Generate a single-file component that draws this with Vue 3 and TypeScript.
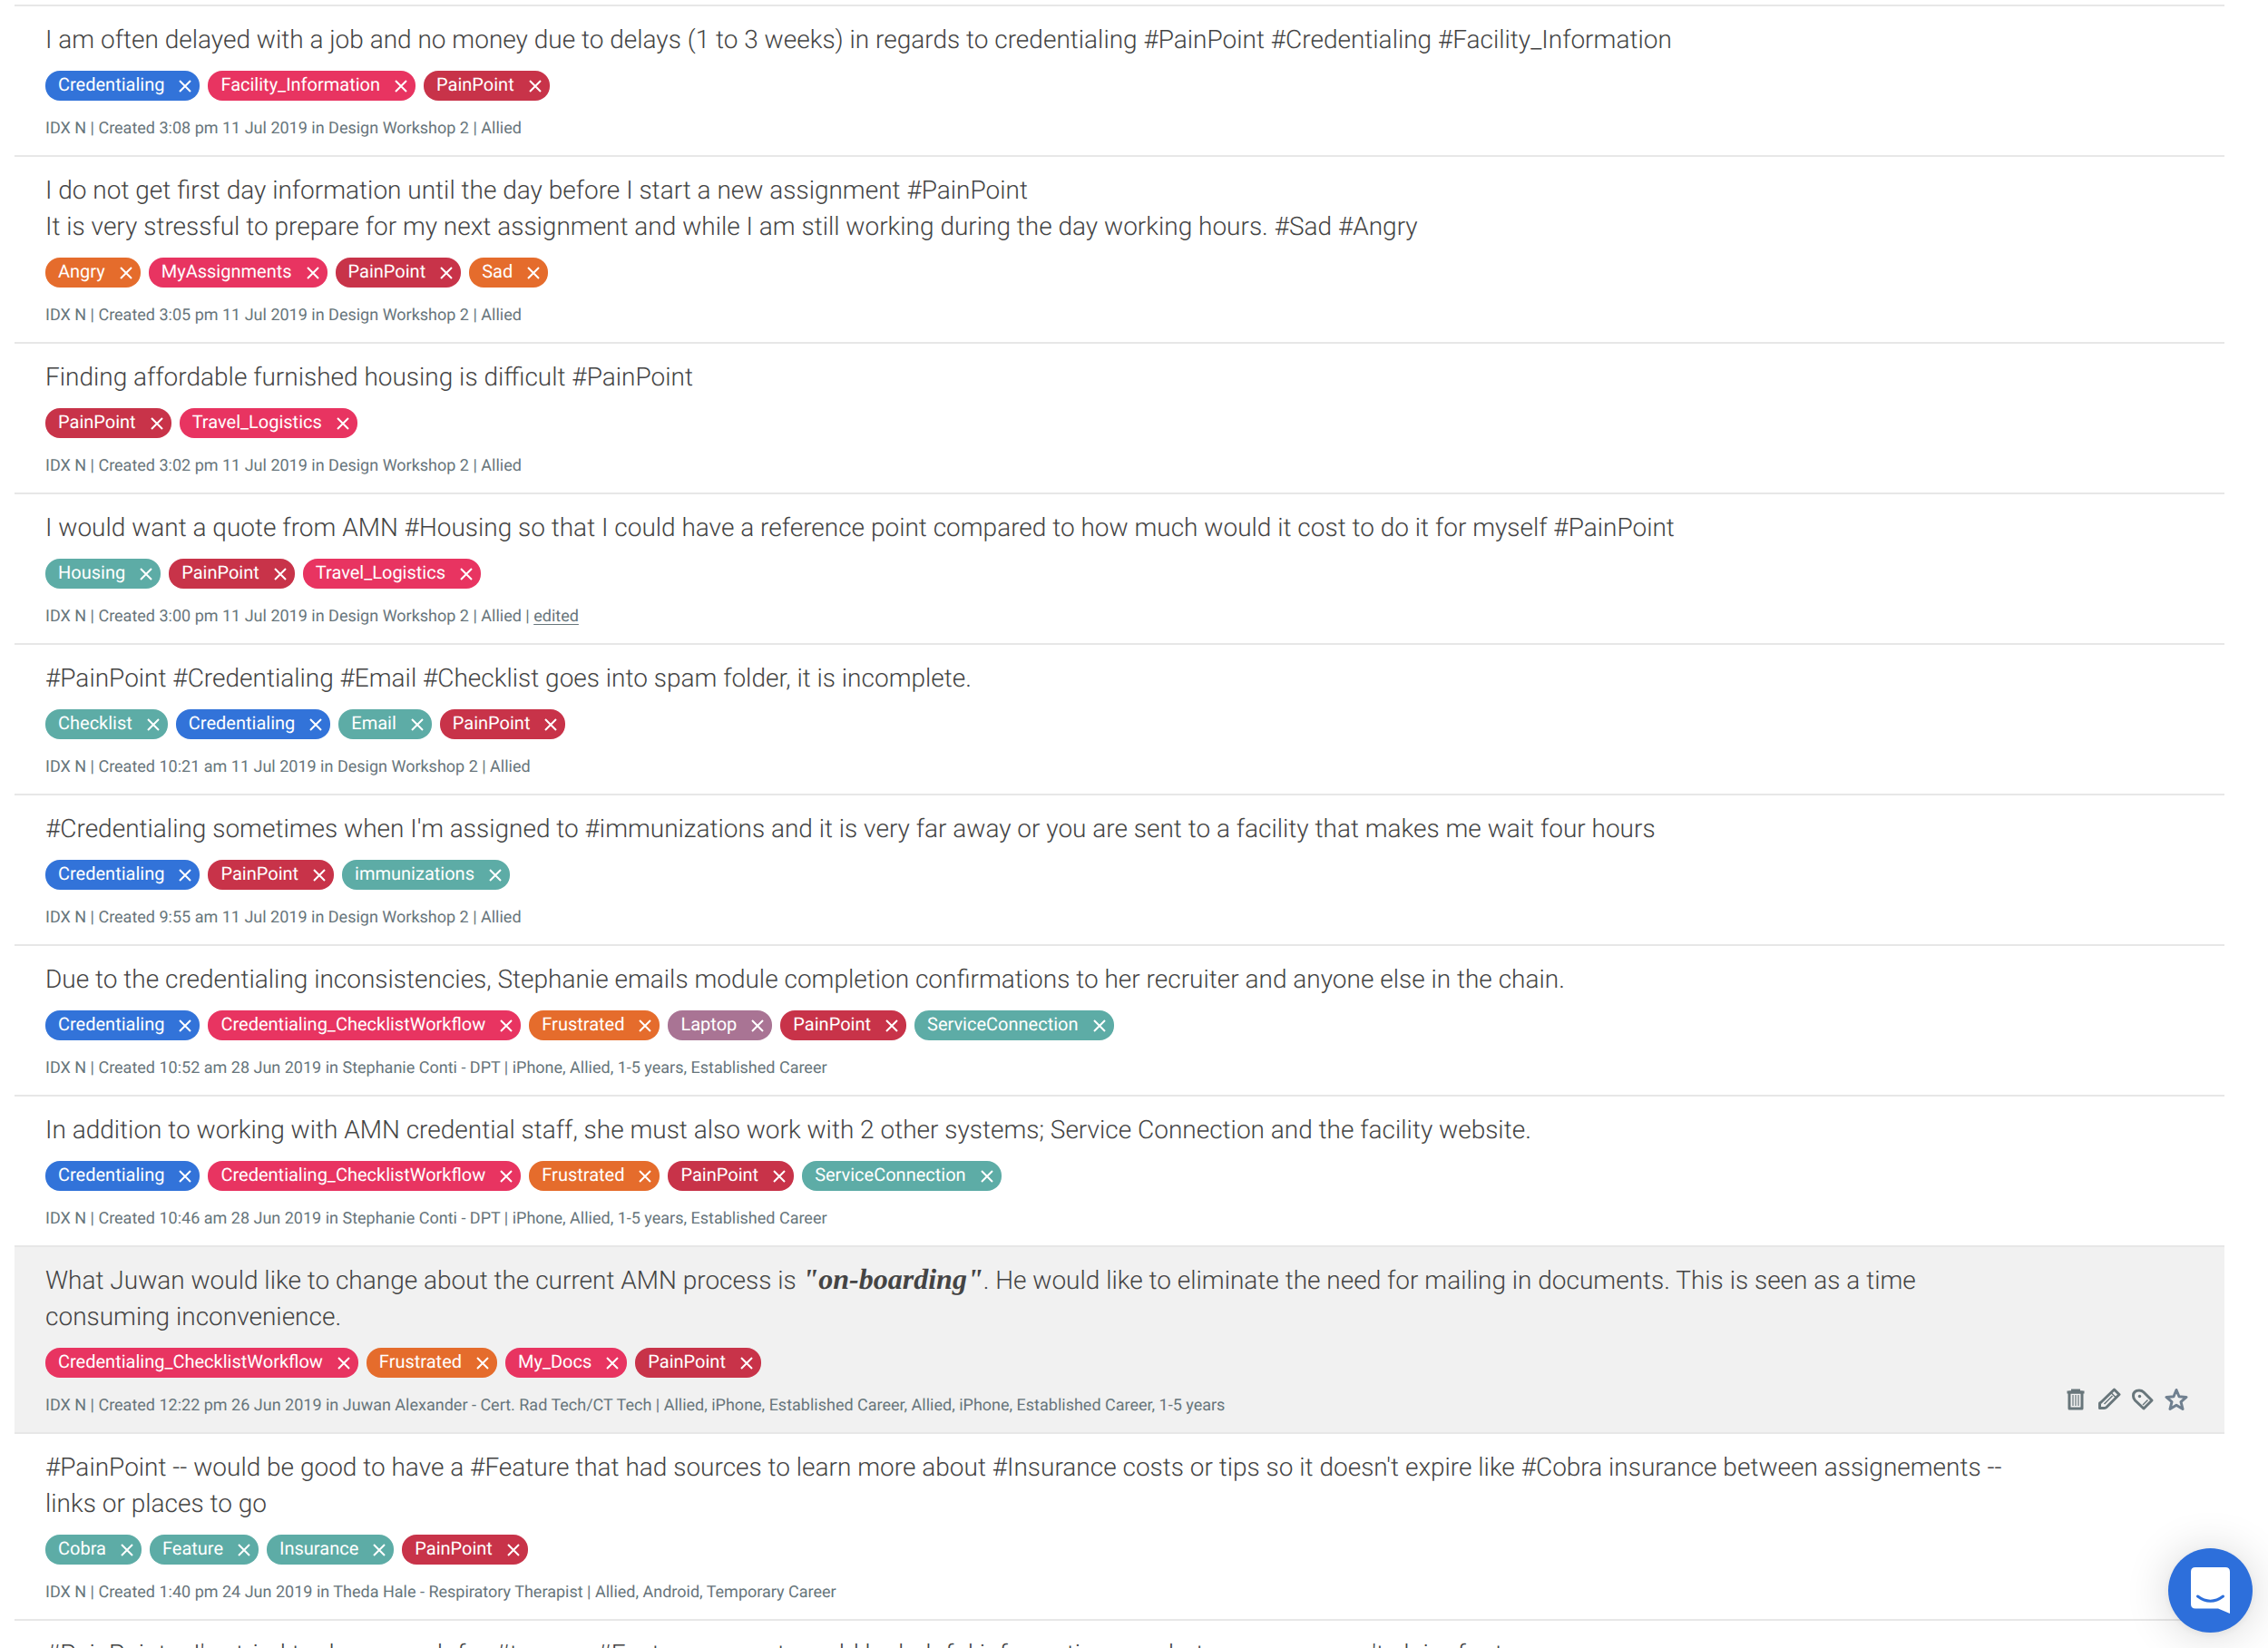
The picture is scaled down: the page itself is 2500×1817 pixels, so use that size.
<script setup lang="ts">
type Tone = 'blue' | 'pink' | 'red' | 'orange' | 'teal' | 'mauve'

interface Part {
  text: string
  strong?: boolean
}

interface Note {
  lines: Part[][]
  tags: string[]
  meta: string
  edited?: boolean
  active?: boolean
}

const tones: Record<string, Tone> = {
  Credentialing: 'blue',
  Facility_Information: 'pink',
  MyAssignments: 'pink',
  Travel_Logistics: 'pink',
  Credentialing_ChecklistWorkflow: 'pink',
  My_Docs: 'pink',
  PainPoint: 'red',
  Angry: 'orange',
  Sad: 'orange',
  Frustrated: 'orange',
  Laptop: 'mauve',
}

const toneOf = (tag: string): Tone => tones[tag] ?? 'teal'

const notes: Note[] = [
  {
    lines: [[{ text: 'I am often delayed with a job and no money due to delays (1 to 3 weeks) in regards to credentialing #PainPoint #Credentialing #Facility_Information' }]],
    tags: ['Credentialing', 'Facility_Information', 'PainPoint'],
    meta: 'IDX N | Created 3:08 pm 11 Jul 2019 in Design Workshop 2 | Allied',
  },
  {
    lines: [
      [{ text: 'I do not get first day information until the day before I start a new assignment #PainPoint' }],
      [{ text: 'It is very stressful to prepare for my next assignment and while I am still working during the day working hours. #Sad #Angry' }],
    ],
    tags: ['Angry', 'MyAssignments', 'PainPoint', 'Sad'],
    meta: 'IDX N | Created 3:05 pm 11 Jul 2019 in Design Workshop 2 | Allied',
  },
  {
    lines: [[{ text: 'Finding affordable furnished housing is difficult #PainPoint' }]],
    tags: ['PainPoint', 'Travel_Logistics'],
    meta: 'IDX N | Created 3:02 pm 11 Jul 2019 in Design Workshop 2 | Allied',
  },
  {
    lines: [[{ text: 'I would want a quote from AMN #Housing so that I could have a reference point compared to how much would it cost to do it for myself #PainPoint' }]],
    tags: ['Housing', 'PainPoint', 'Travel_Logistics'],
    meta: 'IDX N | Created 3:00 pm 11 Jul 2019 in Design Workshop 2 | Allied',
    edited: true,
  },
  {
    lines: [[{ text: '#PainPoint #Credentialing #Email #Checklist goes into spam folder, it is incomplete.' }]],
    tags: ['Checklist', 'Credentialing', 'Email', 'PainPoint'],
    meta: 'IDX N | Created 10:21 am 11 Jul 2019 in Design Workshop 2 | Allied',
  },
  {
    lines: [[{ text: "#Credentialing sometimes when I'm assigned to #immunizations and it is very far away or you are sent to a facility that makes me wait four hours" }]],
    tags: ['Credentialing', 'PainPoint', 'immunizations'],
    meta: 'IDX N | Created 9:55 am 11 Jul 2019 in Design Workshop 2 | Allied',
  },
  {
    lines: [[{ text: 'Due to the credentialing inconsistencies, Stephanie emails module completion confirmations to her recruiter and anyone else in the chain.' }]],
    tags: ['Credentialing', 'Credentialing_ChecklistWorkflow', 'Frustrated', 'Laptop', 'PainPoint', 'ServiceConnection'],
    meta: 'IDX N | Created 10:52 am 28 Jun 2019 in Stephanie Conti - DPT | iPhone, Allied, 1-5 years, Established Career',
  },
  {
    lines: [[{ text: 'In addition to working with AMN credential staff, she must also work with 2 other systems; Service Connection and the facility website.' }]],
    tags: ['Credentialing', 'Credentialing_ChecklistWorkflow', 'Frustrated', 'PainPoint', 'ServiceConnection'],
    meta: 'IDX N | Created 10:46 am 28 Jun 2019 in Stephanie Conti - DPT | iPhone, Allied, 1-5 years, Established Career',
  },
  {
    lines: [[
      { text: 'What Juwan would like to change about the current AMN process is ' },
      { text: '"on-boarding"', strong: true },
      { text: '. He would like to eliminate the need for mailing in documents. This is seen as a time consuming inconvenience.' },
    ]],
    tags: ['Credentialing_ChecklistWorkflow', 'Frustrated', 'My_Docs', 'PainPoint'],
    meta: 'IDX N | Created 12:22 pm 26 Jun 2019 in Juwan Alexander - Cert. Rad Tech/CT Tech | Allied, iPhone, Established Career, Allied, iPhone, Established Career, 1-5 years',
    active: true,
  },
  {
    lines: [[{ text: "#PainPoint -- would be good to have a #Feature that had sources to learn more about #Insurance costs or tips so it doesn't expire like #Cobra insurance between assignements -- links or places to go" }]],
    tags: ['Cobra', 'Feature', 'Insurance', 'PainPoint'],
    meta: 'IDX N | Created 1:40 pm 24 Jun 2019 in Theda Hale - Respiratory Therapist | Allied, Android, Temporary Career',
  },
  {
    lines: [[{ text: "#PainPoint -- I've tried to do research for #taxes -- #Feature request would be helpful information on what you can or can't claim for taxes" }]],
    tags: [],
    meta: '',
  },
]
</script>

<template>
  <main class="page">
    <article v-for="(note, i) in notes" :key="i" class="note" :class="{ active: note.active }">
      <div class="content">
        <p v-for="(line, l) in note.lines" :key="l" class="line">
          <template v-for="(part, p) in line" :key="p"><em v-if="part.strong" class="strong">{{ part.text }}</em><template v-else>{{ part.text }}</template></template>
        </p>
        <ul v-if="note.tags.length" class="tags">
          <li v-for="tag in note.tags" :key="tag" class="tag" :class="toneOf(tag)">
            <span class="name">{{ tag }}</span>
            <button type="button" class="remove" :aria-label="`Remove ${tag}`">
              <svg viewBox="0 0 14 14" width="14" height="14"><path d="M1 1L13 13M13 1L1 13" /></svg>
            </button>
          </li>
        </ul>
        <p v-if="note.meta" class="meta">{{ note.meta }}<template v-if="note.edited"> | <a href="#">edited</a></template></p>
      </div>
      <div v-if="note.active" class="actions">
        <button type="button" aria-label="Delete">
          <svg viewBox="0 0 26 26" width="26" height="26">
            <path d="M6 5h14v18H6z" stroke-width="3" />
            <path d="M3.500 5h19M8 3h10" stroke-width="3" />
            <path d="M10 8v12M13 8v12M16 8v12" stroke-width="1.200" />
          </svg>
        </button>
        <button type="button" aria-label="Edit">
          <svg viewBox="0 0 26 26" width="26" height="26">
            <path d="M18.500 2L24 7.500L10 21.500Q9 22.500 7.500 22.500H2.500V17.500Q2.500 16.500 3.500 16.500z" stroke-width="3" />
            <path d="M15 5.500L20.500 11M16.500 9L7.500 18" stroke-width="1.500" />
          </svg>
        </button>
        <button type="button" aria-label="Tag">
          <svg viewBox="0 0 26 26" width="26" height="26">
            <path d="M9 3Q12 3 14 5L23 14L14 23L4.500 14Q2.500 12 2.500 9Q2.500 3 9 3z" stroke-width="3" />
            <path d="M18.500 13.500L13 19" stroke-width="1.500" />
            <circle class="dot" cx="9.500" cy="9.500" r="1.700" />
          </svg>
        </button>
        <button type="button" aria-label="Favourite" class="star">
          <svg viewBox="0 0 26 26" width="26" height="26">
            <path d="M13 2.500L16 9.800L24 10.400L18 15.600L20 23.500L13 19.300L6 23.500L8 15.600L2 10.400L10 9.800z" stroke-width="3" />
          </svg>
        </button>
      </div>
    </article>

    <button type="button" class="chat" aria-label="Open chat">
      <svg viewBox="0 0 43 51" width="43" height="51">
        <path fill="#fff" d="M5 0H38Q43 0 43 5V51Q36 48 30 45.500H5Q0 45.500 0 40.500V5Q0 0 5 0z" />
        <path fill="none" stroke="#2d6fdb" stroke-width="3" stroke-linecap="round" d="M7.500 32Q21.500 42.500 35.500 32" />
      </svg>
    </button>
  </main>
</template>

<style>
body {
  margin: 0;
  background: #fff;
}
</style>

<style scoped>
.page {
  box-sizing: border-box;
  height: 100vh;
  overflow: hidden;
  padding: 5px 48px 0 16px;
  font-family: Roboto, "Liberation Sans", sans-serif;
  text-rendering: geometricPrecision;
  color: #444;
}

.note {
  display: flex;
  align-items: flex-end;
  justify-content: space-between;
  padding: 17px 40px 17px 34px;
  border-top: 2px solid #e7e7e7;
}

.note.active {
  background: #f1f1f1;
}

.content {
  flex: 1;
  margin-right: 192px;
}

.active .content {
  margin-right: 55px;
}

.line {
  margin: 0;
  font-size: 28px;
  font-weight: 300;
  line-height: 40px;
}

.strong {
  font-family: "Liberation Serif", serif;
  font-size: 32px;
  font-weight: 700;
  font-style: italic;
  line-height: 24px;
}

.tags {
  display: flex;
  flex-wrap: wrap;
  gap: 9px;
  margin: 14px 0 19px;
  padding: 0;
  list-style: none;
}

.tag {
  display: flex;
  align-items: center;
  height: 33px;
  padding: 0 9px 0 14px;
  border-radius: 16px;
  color: #fff;
}

.name {
  padding-bottom: 4px;
  font-size: 20px;
  line-height: 24px;
}

.remove {
  display: flex;
  margin-left: 16px;
  padding: 0;
  border: 0;
  background: none;
}

.remove svg {
  fill: none;
  stroke: #fff;
  stroke-width: 2;
}

.blue { background: #3273d9; }
.pink { background: #e83461; }
.red { background: #c83349; }
.orange { background: #e56c2c; }
.teal { background: #5daca6; }
.mauve { background: #a97494; }

.meta {
  margin: 0;
  font-size: 18px;
  line-height: 24px;
  color: #67757b;
}

.meta a {
  color: inherit;
  text-underline-offset: 3px;
}

.actions {
  display: flex;
  gap: 11px;
  margin-bottom: 6px;
}

.actions button {
  display: flex;
  padding: 0;
  border: 0;
  background: none;
  color: #68767b;
}

.actions .star {
  color: #708090;
}

.actions svg {
  fill: none;
  stroke: currentColor;
  stroke-linejoin: round;
}

.actions .dot {
  fill: currentColor;
  stroke: none;
}

.chat {
  position: fixed;
  right: 17px;
  bottom: 17px;
  display: flex;
  align-items: center;
  justify-content: center;
  width: 93px;
  height: 93px;
  padding: 0;
  border: 0;
  border-radius: 50%;
  background: #2d6fdb;
  box-shadow: 0 2px 10px rgba(0, 0, 0, 0.06), 0 3px 50px rgba(0, 0, 0, 0.16);
}
</style>
